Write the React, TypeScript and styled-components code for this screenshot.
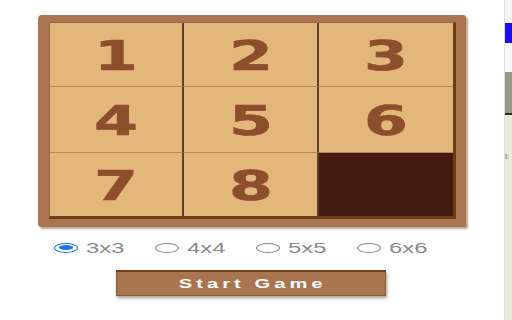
import React, { useState } from "react";
import styled, { createGlobalStyle } from "styled-components";

const Global = createGlobalStyle`
  html, body { margin: 0; padding: 0; background: #ffffff; }
  body { width: 512px; height: 320px; overflow: hidden; font-family: "Liberation Sans", Arial, sans-serif; }
`;

const Page = styled.div`
  display: flex;
  width: 512px;
  height: 320px;
`;

const Main = styled.div`
  width: 504px;
  display: flex;
  flex-direction: column;
  align-items: flex-start;
  padding-top: 15px;
  box-sizing: border-box;
`;

const Board = styled.div`
  margin-left: 38px;
  width: 428px;
  height: 212px;
  box-sizing: border-box;
  padding: 7px 10px 8px 11px;
  background: #aa7550;
  border-radius: 4px 3px 2px 3px;
  box-shadow: 2px 2px 2px rgba(90, 60, 20, 0.45);
`;

const Grid = styled.div`
  width: 100%;
  height: 100%;
  box-sizing: border-box;
  border-top: 1px solid #9a6840;
  border-left: 1px solid #9a6840;
  border-right: 3px solid #6a3e14;
  border-bottom: 3px solid #6a3e14;
  display: grid;
  grid-template-columns: 134px 135px 134px;
  grid-template-rows: 64px 66px 63px;
  background: #e3b67c;
`;

const Tile = styled.div<{ $col: number; $row: number; $empty?: boolean }>`
  box-sizing: border-box;
  background: ${(p) => (p.$empty ? "#431c0f" : "#e3b67c")};
  border-right: ${(p) => (p.$col < 2 ? "2px solid #5e4028" : "none")};
  border-bottom: ${(p) => (p.$row < 2 ? "1px solid #b78652" : "none")};
  display: flex;
  align-items: center;
  justify-content: center;
  overflow: hidden;
`;

const Digit = styled.span`
  display: inline-block;
  font-family: "DejaVu Sans", Verdana, sans-serif;
  font-weight: 700;
  font-size: 40px;
  line-height: 1;
  color: #8d4f2b;
  -webkit-text-stroke: 0.6px #8d4f2b;
  transform: scaleX(1.58);
  margin-top: 2px;
`;

const Options = styled.div`
  margin-top: 15px;
  margin-left: 54px;
  display: flex;
  align-items: center;
  gap: 30px;
  height: 12px;
`;

const Option = styled.label`
  display: flex;
  align-items: center;
  gap: 8px;
  width: 71px;
  cursor: pointer;
`;

const Radio = styled.span<{ $on: boolean }>`
  position: relative;
  width: 24px;
  height: 10px;
  box-sizing: border-box;
  border-radius: 50%;
  border: ${(p) => (p.$on ? "1.5px solid #1a73e8" : "1.3px solid #8a8a8a")};
  background: #fff;
  flex: none;
  &::after {
    content: "";
    display: ${(p) => (p.$on ? "block" : "none")};
    position: absolute;
    left: 3.5px;
    top: 1.3px;
    width: 14px;
    height: 4.5px;
    border-radius: 50%;
    background: #1a73e8;
  }
`;

const Label = styled.span`
  display: inline-block;
  width: 38px;
  text-align: center;
  font-size: 14px;
  line-height: 12px;
  color: #8a8a8a;
`;

const Stretch = styled.span`
  display: inline-block;
  transform: scaleX(1.7);
`;

const Button = styled.button`
  margin-top: 16px;
  margin-left: 116px;
  width: 270px;
  height: 26px;
  box-sizing: border-box;
  background: #a97450;
  border: 1px solid #8a5a34;
  border-top: 2px solid #6f4218;
  box-shadow: 1px 2px 3px rgba(70, 40, 10, 0.45);
  display: flex;
  align-items: center;
  justify-content: center;
  padding: 0;
  cursor: pointer;
`;

const ButtonText = styled.span`
  display: inline-block;
  font-family: "Liberation Sans", Arial, sans-serif;
  font-weight: 700;
  font-size: 13px;
  letter-spacing: 2.6px;
  color: #ffffff;
  transform: scaleX(1.55);
  margin-top: -1px;
  margin-left: 3px;
`;

const Side = styled.div`
  width: 8px;
  height: 320px;
  box-sizing: border-box;
  border-left: 1px solid #dddddd;
  display: flex;
  flex-direction: column;
  background: #f6f6f6;
  overflow: hidden;
`;

const SideBlock = styled.div<{ $h: number; $c: string }>`
  height: ${(p) => p.$h}px;
  background: ${(p) => p.$c};
  flex: none;
`;

const SideRest = styled.div`
  flex: 1;
  background: #ebebdc;
  padding-top: 38px;
`;

const SideText = styled.span`
  display: block;
  font-size: 7px;
  line-height: 8px;
  color: #3a4a80;
  white-space: nowrap;
`;

const tiles = [1, 2, 3, 4, 5, 6, 7, 8, 0];

export default function App() {
  const [size, setSize] = useState("3x3");
  const opts = ["3x3", "4x4", "5x5", "6x6"];
  return (
    <>
      <Global />
      <Page>
        <Main>
          <Board>
            <Grid>
              {tiles.map((t, i) => (
                <Tile key={i} $col={i % 3} $row={Math.floor(i / 3)} $empty={t === 0}>
                  {t !== 0 && <Digit>{t}</Digit>}
                </Tile>
              ))}
            </Grid>
          </Board>
          <Options>
            {opts.map((o) => (
              <Option key={o} onClick={() => setSize(o)}>
                <Radio $on={size === o} />
                <Label>
                  <Stretch>{o}</Stretch>
                </Label>
              </Option>
            ))}
          </Options>
          <Button>
            <ButtonText>Start Game</ButtonText>
          </Button>
        </Main>
        <Side>
          <SideBlock $h={23} $c="#f6f6f6" />
          <SideBlock $h={20} $c="#1a0cf5" />
          <SideBlock $h={29} $c="#f8f8f8" />
          <SideBlock $h={41} $c="#989886" />
          <SideBlock $h={2} $c="#2a2a22" />
          <SideRest>
            <SideText>I:</SideText>
          </SideRest>
        </Side>
      </Page>
    </>
  );
}
